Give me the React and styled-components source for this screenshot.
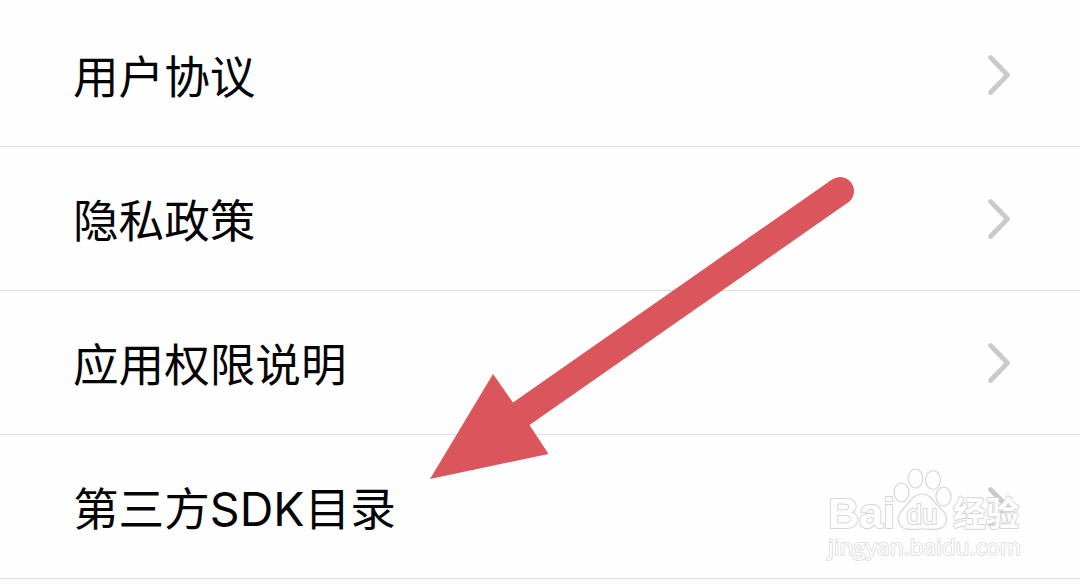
import React from "react";
import styled, { createGlobalStyle } from "styled-components";

const items = [
  { id: 1, label: "用户协议" },
  { id: 2, label: "隐私政策" },
  { id: 3, label: "应用权限说明" },
  {
    id: 4,
    label: (
      <>
        第三方<span>SDK</span>目录
      </>
    ),
  },
];

function App() {
  return (
    <>
      <GlobalStyle />
      <Page>
        <List>
          {items.map(({ id, label }) => (
            <Row key={id}>
              <Label>{label}</Label>
              <Chevron viewBox="0 0 26 44">
                <path d="M4.500 4.500L21.500 22L4.500 39.500" />
              </Chevron>
            </Row>
          ))}
        </List>
        <Arrow viewBox="0 0 430 306">
          <path d="M0 303L63 198L83 226.500L402 3.500A14 14 0 0 1 418 26.500L99.500 249L118.500 278Z" />
        </Arrow>
        <Watermark />
      </Page>
    </>
  );
}

function Watermark() {
  return (
    <Mark viewBox="0 0 210 104">
      <text x="8" y="68" fontSize="43" fontWeight="700" textLength="67" lengthAdjust="spacingAndGlyphs">
        Bai
      </text>
      <ellipse cx="81.500" cy="32.500" rx="7.500" ry="9.500" />
      <ellipse cx="95.500" cy="18.500" rx="7.300" ry="9.500" />
      <ellipse cx="113" cy="20" rx="7.500" ry="9.500" />
      <ellipse cx="123.500" cy="36.500" rx="7.500" ry="9.500" />
      <path d="M102 34C93 34 90 42 85 47C79 53 76 58 80 65C84 71.500 94 69 102 69C110 69 120 71.500 125 65C129 58 125 52 119 47C113 42 111 34 102 34Z" />
      <text x="86.500" y="64" fontSize="27" textLength="31" lengthAdjust="spacingAndGlyphs">
        du
      </text>
      <text x="133" y="66" fontSize="34" fontWeight="700" textLength="66" lengthAdjust="spacingAndGlyphs">
        经验
      </text>
      <Site x="8" y="94.500" fontSize="22" textLength="193" lengthAdjust="spacingAndGlyphs">
        jingyan.baidu.com
      </Site>
    </Mark>
  );
}

export default App;

const GlobalStyle = createGlobalStyle`
  * {
    box-sizing: border-box;
  }
  body {
    margin: 0;
    background: #fafafa;
    font-family: "Noto Sans CJK SC", sans-serif;
  }
`;

const Page = styled.div`
  position: relative;
  width: 1080px;
  height: 584px;
  overflow: hidden;
`;

const List = styled.div`
  padding-top: 3px;
  background: #fefefe;
`;

const Row = styled.div`
  display: flex;
  align-items: center;
  justify-content: space-between;
  height: 144px;
  padding: 1px 68px 0 73px;
  border-bottom: 1px solid #dfdfdf;
`;

const Label = styled.span`
  padding-bottom: 3px;
  color: #050505;
  font-size: 45.6px;
  line-height: 60px;
  white-space: nowrap;

  > span {
    font-family: Inter, sans-serif;
    font-size: 46.5px;
    line-height: 1;
    letter-spacing: 0.1px;
  }
`;

const Chevron = styled.svg`
  width: 26px;
  height: 44px;
  fill: none;
  stroke: #cacaca;
  stroke-width: 4.8;
  stroke-linecap: round;
  stroke-linejoin: round;
`;

const Arrow = styled.svg`
  position: absolute;
  top: 176px;
  left: 430px;
  width: 430px;
  height: 306px;
  fill: #db565c;
`;

const Mark = styled.svg`
  position: absolute;
  top: 460px;
  left: 820px;
  width: 210px;
  height: 104px;
  fill: #fefefe;
  stroke: #d6d6d6;
  stroke-width: 1.2;
  stroke-linejoin: round;

  > text {
    font-family: "Liberation Sans", "Noto Sans CJK SC", sans-serif;
    paint-order: stroke;
    stroke-width: 2;
  }
`;

const Site = styled.text`
  && {
    font-family: "Open Sans", sans-serif;
    stroke: #dadada;
    stroke-width: 1.6;
  }
`;
